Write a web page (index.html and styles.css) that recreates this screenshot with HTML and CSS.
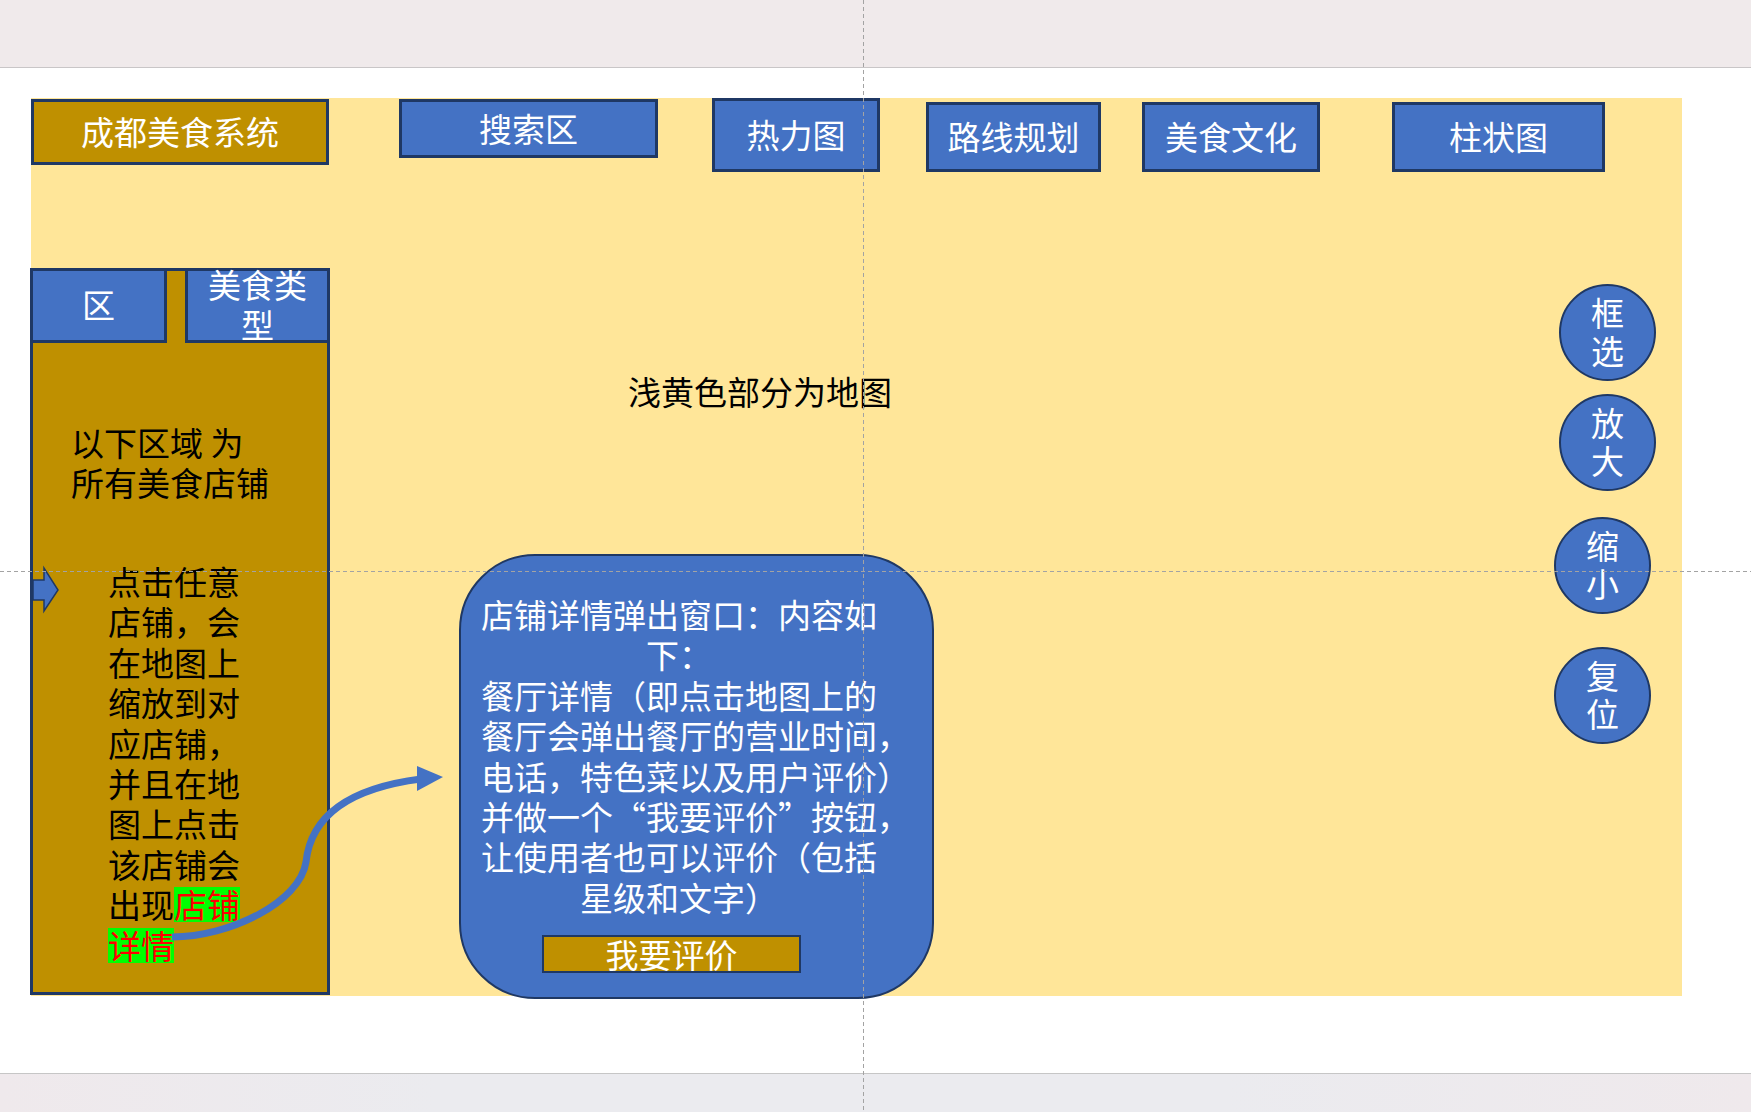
FILE: index.html
```html
<!DOCTYPE html>
<html lang="zh-CN">
<head>
<meta charset="utf-8">
<title>成都美食系统</title>
<link rel="stylesheet" href="styles.css">
</head>
<body>
<div class="screen">
  <div class="top-band"></div>
  <div class="canvas">
    <div class="map">
      <div class="nav">
        <div class="box gold title">成都美食系统</div>
        <div class="box blue search">搜索区</div>
        <div class="box blue heat">热力图</div>
        <div class="box blue route">路线规划</div>
        <div class="box blue culture">美食文化</div>
        <div class="box blue chart">柱状图</div>
      </div>
      <div class="body">
        <div class="panel">
          <div class="tabs">
            <div class="box blue tab-area">区</div>
            <div class="box blue tab-type">美食类<br>型</div>
          </div>
          <p class="panel-note">以下区域 为<br>所有美食店铺</p>
          <p class="panel-desc">点击任意<br>店铺，会<br>在地图上<br>缩放到对<br>应店铺，<br>并且在地<br>图上点击<br>该店铺会<br>出现<span class="hl">店铺</span><br><span class="hl">详情</span></p>
        </div>
        <div class="map-label">浅黄色部分为地图</div>
        <div class="tools">
          <div class="circle">框<br>选</div>
          <div class="circle zoom-in">放<br>大</div>
          <div class="circle shift zoom-out">缩<br>小</div>
          <div class="circle shift reset">复<br>位</div>
        </div>
      </div>
      <div class="popup">
        <p class="popup-text">店铺详情弹出窗口：内容如<br>下：<br>餐厅详情（即点击地图上的<br>餐厅会弹出餐厅的营业时间<span class="hang">，</span><br>电话，特色菜以及用户评价<span class="hang">）</span><br>并做一个“我要评价”按钮<span class="hang">，</span><br>让使用者也可以评价（包括<br>星级和文字）</p>
        <div class="rate-btn">我要评价</div>
      </div>
    </div>
  </div>
  <div class="bottom-band"></div>
  <svg class="overlay" width="1751" height="1112" viewBox="0 0 1751 1112" aria-hidden="true">
    <polygon points="33,580 44,580 44,568 58,590 44,611 44,600 33,600" fill="#4472c4" stroke="#1f3864" stroke-width="1.5"/>
    <path d="M172,937 C230,937 300,902 306,862 C311,815 350,788 421,779" fill="none" stroke="#4472c4" stroke-width="7"/>
    <polygon points="417,766 443,777 417,791" fill="#4472c4"/>
    <line x1="863.5" y1="0" x2="863.5" y2="1112" stroke="#a3a3a3" stroke-width="1" stroke-dasharray="4 3"/>
    <line x1="0" y1="571.5" x2="1751" y2="571.5" stroke="#a3a3a3" stroke-width="1" stroke-dasharray="4 3"/>
  </svg>
</div>
</body>
</html>
```

FILE: styles.css
```css
* {
  box-sizing: border-box;
}

body {
  margin: 0;
  font-family: "Noto Sans CJK SC", "Noto Sans", sans-serif;
  background: #ffffff;
}

.screen {
  position: relative;
  width: 1751px;
  height: 1112px;
  overflow: hidden;
}

.top-band {
  height: 68px;
  background: #f0eaeb;
  border-bottom: 1px solid #c9c6c7;
}

.canvas {
  height: 1005px;
  background: #ffffff;
  padding: 30px 0 0 31px;
}

.bottom-band {
  height: 39px;
  border-top: 1px solid #c6c6c6;
  background: linear-gradient(90deg, #efe9ec 0%, #ebebef 25%, #ebebef 70%, #efe9ec 100%);
}

.map {
  position: relative;
  width: 1651px;
  height: 898px;
  background: #ffe699;
  display: flex;
  flex-direction: column;
}

/* boxes */
.box {
  border: 3px solid #1f3864;
  color: #ffffff;
  font-size: 33px;
  line-height: 40px;
  display: flex;
  align-items: center;
  justify-content: center;
  text-align: center;
  white-space: nowrap;
}

.gold {
  background: #bf9000;
}

.blue {
  background: #4472c4;
}

.nav {
  display: flex;
  align-items: flex-start;
  height: 74px;
}

.title {
  width: 298px;
  height: 66px;
  margin-top: 1px;
  padding-bottom: 2px;
}

.search {
  width: 259px;
  height: 59px;
  margin: 1px 0 0 70px;
  padding-bottom: 2px;
}

.heat {
  width: 168px;
  height: 74px;
  margin-left: 54px;
  padding-bottom: 2px;
}

.route {
  width: 175px;
  height: 70px;
  margin: 4px 0 0 46px;
  padding-bottom: 2px;
}

.culture {
  width: 178px;
  height: 70px;
  margin: 4px 0 0 41px;
  padding-bottom: 2px;
}

.chart {
  width: 213px;
  height: 70px;
  margin: 4px 0 0 72px;
  padding-bottom: 2px;
}

/* main row */
.body {
  display: flex;
  align-items: flex-start;
  margin-top: 96px;
}

.panel {
  width: 300px;
  height: 727px;
  margin-left: -1px;
  border: 3px solid #1f3864;
  background: #bf9000;
  flex-shrink: 0;
}

.tabs {
  display: flex;
  justify-content: space-between;
  margin: -3px -3px 0;
}

.tab-area {
  width: 137px;
  height: 75px;
  padding-bottom: 4px;
}

.tab-type {
  width: 145px;
  height: 75px;
  padding-bottom: 4px;
}

.panel-note {
  margin: 79px 0 0 38px;
  font-size: 33px;
  line-height: 40px;
  color: #000000;
  white-space: nowrap;
}

.panel-desc {
  margin: 59px 0 0 75px;
  font-size: 33px;
  line-height: 40.4px;
  color: #000000;
  white-space: nowrap;
}

.hl {
  display: inline-block;
  height: 35px;
  line-height: 35px;
  background: #00ff00;
  color: #ff0000;
}

.map-label {
  margin: 103px 0 0 298px;
  font-size: 33px;
  line-height: 40px;
  color: #000000;
  white-space: nowrap;
}

.tools {
  margin: 16px 26px 0 auto;
  width: 102px;
  display: flex;
  flex-direction: column;
  align-items: flex-end;
}

.circle {
  width: 97px;
  height: 97px;
  border-radius: 50%;
  border: 2px solid #1f3864;
  background: #4472c4;
  color: #ffffff;
  font-size: 33px;
  line-height: 38px;
  padding-bottom: 4px;
  display: flex;
  align-items: center;
  justify-content: center;
  text-align: center;
}

.zoom-in {
  margin-top: 13px;
}

.zoom-out {
  margin-top: 26px;
}

.reset {
  margin-top: 33px;
}

.shift {
  margin-right: 5px;
}

/* popup */
.popup {
  position: absolute;
  left: 428px;
  top: 456px;
  width: 475px;
  height: 445px;
  border: 2px solid #1f3864;
  border-radius: 76px;
  background: #4472c4;
  color: #ffffff;
  padding-top: 38px;
}

.popup-text {
  margin: 0 0 0 18px;
  width: 400px;
  font-size: 33px;
  line-height: 40.4px;
  text-align: center;
  white-space: nowrap;
}

.hang {
  margin-right: -1em;
}

.rate-btn {
  margin: 18px 0 0 81px;
  width: 259px;
  height: 38px;
  border: 2px solid #1f3864;
  background: #bf9000;
  color: #ffffff;
  font-size: 33px;
  line-height: 34px;
  text-align: center;
}

.overlay {
  position: absolute;
  left: 0;
  top: 0;
  pointer-events: none;
}
```
